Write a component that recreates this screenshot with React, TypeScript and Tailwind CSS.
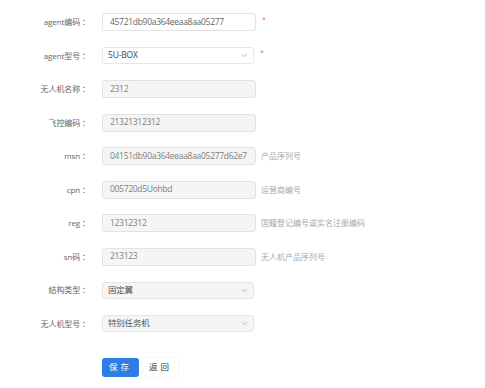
import { ChevronDown } from "lucide-react";

type Field = {
  label: string;
  value: string;
  kind: "input" | "select";
  disabled?: boolean;
  required?: boolean;
  hint?: string;
};

const fields: Field[] = [
  { label: "agent编码", value: "45721db90a364eeaa8aa05277", kind: "input", required: true },
  { label: "agent型号", value: "5U-BOX", kind: "select", required: true },
  { label: "无人机名称", value: "2312", kind: "input", disabled: true },
  { label: "飞控编码", value: "21321312312", kind: "input", disabled: true },
  { label: "msn", value: "04151db90a364eeaa8aa05277d62e7", kind: "input", disabled: true, hint: "产品序列号" },
  { label: "cpn", value: "005720d5Uohbd", kind: "input", disabled: true, hint: "运营商编号" },
  { label: "reg", value: "12312312", kind: "input", disabled: true, hint: "国籍登记编号或实名注册编码" },
  { label: "sn码", value: "213123", kind: "input", disabled: true, hint: "无人机产品序列号" },
  { label: "结构类型", value: "固定翼", kind: "select", disabled: true },
  { label: "无人机型号", value: "特别任务机", kind: "select", disabled: true },
];

const font = { fontFamily: '"Open Sans", "Noto Sans CJK SC", sans-serif' };

function Row({ f }: { f: Field }) {
  const box = f.disabled ? "bg-[#f5f5f5] text-[#808080]" : "bg-white text-[#666]";
  return (
    <div className="flex h-[18px] items-center">
      <div className="w-[90px] shrink-0 text-right text-[8px] tracking-[-0.1px] text-[#666]">
        {f.label}
        <span className="ml-[2px]">：</span>
      </div>
      <div className="ml-[12px] flex items-center">
        {f.kind === "input" ? (
          <div
            className={`flex h-[18px] w-[154px] items-center overflow-hidden whitespace-nowrap rounded-[3px] border border-[#e2e2e2] px-[7px] text-[8.5px] tracking-[-0.3px] ${box}`}
          >
            {f.value}
          </div>
        ) : (
          <div
            className={`flex h-[17px] w-[152px] items-center justify-between rounded-[3px] border border-[#e6e6e6] pl-[5px] pr-[4px] text-[8.5px] tracking-[-0.2px] ${
              f.disabled ? "bg-[#f5f5f5] text-[#555]" : "bg-white text-[#444]"
            }`}
          >
            <span>{f.value}</span>
            <ChevronDown className="h-[9px] w-[9px] text-[#999]" strokeWidth={1.75} />
          </div>
        )}
        {f.required && <span className="ml-[6px] -mt-[4px] text-[7px] text-[#f56c6c]">*</span>}
        {f.hint && <span className="ml-[5px] text-[8px] text-[#aaa]">{f.hint}</span>}
      </div>
    </div>
  );
}

export default function App() {
  return (
    <div className="h-[388px] w-[485px] bg-white" style={font}>
      <div className="flex flex-col gap-[15.5px] pt-[13px]">
        {fields.map((f) => (
          <Row key={f.label} f={f} />
        ))}
      </div>
      <div className="ml-[102px] mt-[25px] flex gap-[4px]">
        <button className="h-[19px] w-[37px] rounded-[3px] bg-[#2f7de1] text-[8.5px] tracking-[3px] text-white">
          保存
        </button>
        <button className="h-[19px] w-[35px] rounded-[3px] bg-white text-[8.5px] tracking-[3px] text-[#333] shadow-[0_0_3px_rgba(0,0,0,0.08)]">
          返回
        </button>
      </div>
    </div>
  );
}
